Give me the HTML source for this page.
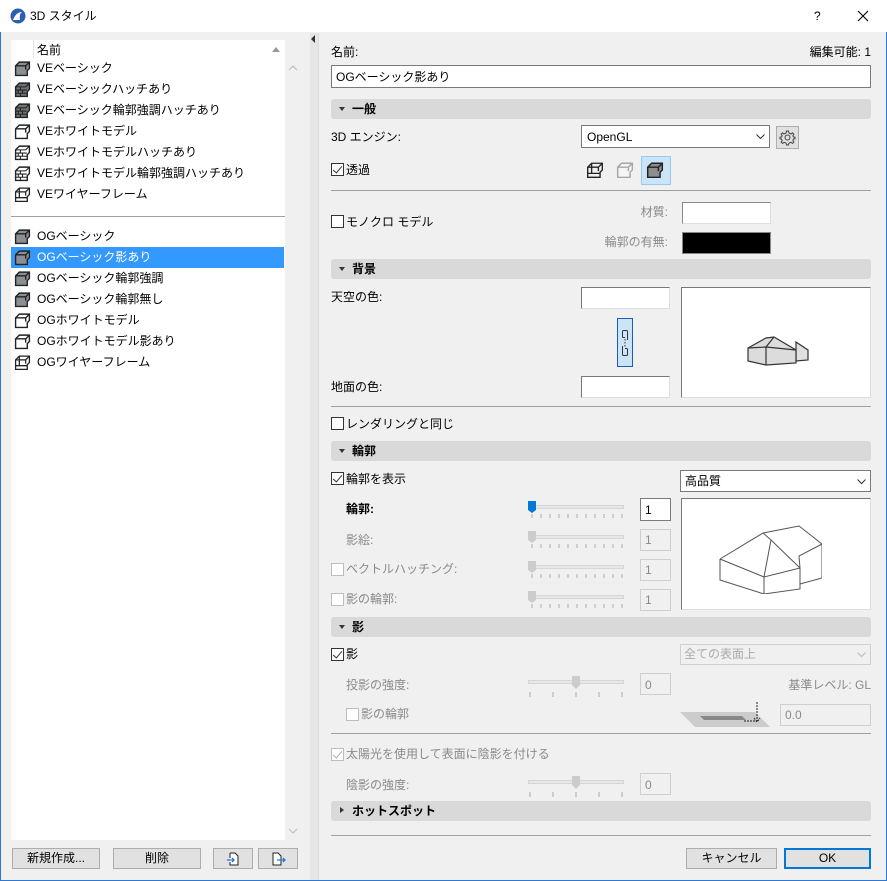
<!DOCTYPE html>
<html><head><meta charset="utf-8">
<style>
*{box-sizing:border-box;margin:0;padding:0}
body{width:887px;height:881px;overflow:hidden;background:#f0f0f0;font-family:"Liberation Sans","Noto Sans CJK JP",sans-serif;font-size:12px;color:#000;position:relative}
.a{position:absolute}
.t{position:absolute;white-space:nowrap;line-height:14px}
.g{color:#8a8a8a}
.box{position:absolute;background:#fff;border:1px solid #7a7a7a}
.dbox{position:absolute;background:#f0f0f0;border:1px solid #cfcfcf}
.sec{position:absolute;left:331px;width:540px;height:20px;background:#d9d9d9;border-radius:3px}
.sec span{position:absolute;left:21px;top:3px;font-weight:bold;line-height:14px}
.sec i{position:absolute;left:8px;top:8px;width:0;height:0;border-left:3px solid transparent;border-right:3px solid transparent;border-top:4px solid #333}
.hr{position:absolute;left:331px;width:540px;height:1px;background:#a0a0a0}
.cb{position:absolute;width:13px;height:13px;border:1px solid #333;background:#fff}
.cb.d{border-color:#bdbdbd}
.ck::after{content:"";position:absolute;left:3px;top:0px;width:4px;height:8px;border-right:1.5px solid #333;border-bottom:1.5px solid #333;transform:rotate(40deg)}
.ck.d::after{border-color:#aaa}
.btn{position:absolute;height:21px;background:#e1e1e1;border:1px solid #adadad;text-align:center;line-height:19px}
.sl{position:absolute;width:96px;height:4px;background:#e7e7e7;border:1px solid #d6d6d6}
.item{position:absolute;left:11px;width:273px;height:21px}
.item span{position:absolute;left:26px;top:3px;line-height:14px;white-space:nowrap}
.item svg{position:absolute;left:3px;top:2px}
</style></head><body>
<div class="a" style="left:0;top:0;width:887px;height:881px;border:1px solid #2b79d6;border-top:none"></div>
<div class="a" style="left:0;top:0;width:887px;height:32px;background:#fff"></div>
<svg class="a" style="left:10px;top:8px" width="16" height="16"><circle cx="8" cy="8" r="7.5" fill="#2d5eb5"/><path d="M3 12 Q6 4 12 4 Q9 6 10 12" fill="#fff"/></svg>
<div class="t" style="left:30px;top:9px">3D スタイル</div>
<div class="t" style="left:814px;top:9px">?</div>
<svg class="a" style="left:857px;top:10px" width="12" height="12"><path d="M1 1 L11 11 M11 1 L1 11" stroke="#000" stroke-width="1.1"/></svg>

<div class="a" style="left:11px;top:40px;width:274px;height:800px;background:#fff"></div>
<div class="a" style="left:33px;top:40px;width:1px;height:18px;background:#e5e5e5"></div>
<div class="t" style="left:37px;top:43px">名前</div>
<div class="a" style="left:272px;top:47px;border-left:4px solid transparent;border-right:4px solid transparent;border-bottom:5px solid #999"></div>
<svg class="a" style="left:288px;top:65px" width="10" height="6"><path d="M1 5 L5 1 L9 5" stroke="#bbb" fill="none"/></svg>
<svg class="a" style="left:288px;top:828px" width="10" height="6"><path d="M1 1 L5 5 L9 1" stroke="#bbb" fill="none"/></svg>

<svg width="0" height="0" style="position:absolute">
<defs>
<symbol id="cg" viewBox="0 0 16 16"><path d="M1.5 5.5 L5 2 H14.5 V8 L12.5 10 V14.5 H1.5 Z" fill="#8b8e92" stroke="#222" stroke-width="1.3"/><path d="M1.5 5.5 H11 V9 M11 5.5 L14.5 2" fill="none" stroke="#222" stroke-width="1.3"/></symbol>
<symbol id="cw" viewBox="0 0 16 16"><path d="M1.5 5.5 L5 2 H14.5 V8 L12.5 10 V14.5 H1.5 Z" fill="#fff" stroke="#222" stroke-width="1.3"/><path d="M1.5 5.5 H11 V9 M11 5.5 L14.5 2" fill="none" stroke="#222" stroke-width="1.3"/></symbol>
<symbol id="chg" viewBox="0 0 16 16"><path d="M1.5 5.5 L5 2 H14.5 V8 L12.5 10 V14.5 H1.5 Z" fill="#6f7276" stroke="#222" stroke-width="1.3"/><path d="M1.5 5.5 H11 M1.5 8.5 H12 M1.5 11.5 H12.5 M6 5.5 V8.5 M4 8.5 V11.5 M8 8.5 V11.5 M6 11.5 V14.5 M11 5.5 L14.5 2" fill="none" stroke="#222" stroke-width="1"/></symbol>
<symbol id="chw" viewBox="0 0 16 16"><path d="M1.5 5.5 L5 2 H14.5 V8 L12.5 10 V14.5 H1.5 Z" fill="#fff" stroke="#222" stroke-width="1.3"/><path d="M1.5 5.5 H11 M1.5 8.5 H12 M1.5 11.5 H12.5 M6 5.5 V8.5 M4 8.5 V11.5 M8 8.5 V11.5 M6 11.5 V14.5 M11 5.5 L14.5 2" fill="none" stroke="#222" stroke-width="1"/></symbol>
<symbol id="cf" viewBox="0 0 16 16"><path d="M1.5 5.5 L5 2 H14.5 V8 L12.5 10 V14.5 H1.5 Z M5 2 V11 H1.5 M5 11 L12.5 11" fill="none" stroke="#222" stroke-width="1.2"/><path d="M1.5 5.5 H11 V9 M11 5.5 L14.5 2" fill="none" stroke="#222" stroke-width="1.2"/></symbol>
</defs></svg>

<div class="item" style="top:58px"><svg width="17" height="17"><use href="#cg"/></svg><span>VEベーシック</span></div>
<div class="item" style="top:79px"><svg width="17" height="17"><use href="#chg"/></svg><span>VEベーシックハッチあり</span></div>
<div class="item" style="top:100px"><svg width="17" height="17"><use href="#chg"/></svg><span>VEベーシック輪郭強調ハッチあり</span></div>
<div class="item" style="top:121px"><svg width="17" height="17"><use href="#cw"/></svg><span>VEホワイトモデル</span></div>
<div class="item" style="top:142px"><svg width="17" height="17"><use href="#chw"/></svg><span>VEホワイトモデルハッチあり</span></div>
<div class="item" style="top:163px"><svg width="17" height="17"><use href="#chw"/></svg><span>VEホワイトモデル輪郭強調ハッチあり</span></div>
<div class="item" style="top:184px"><svg width="17" height="17"><use href="#cf"/></svg><span>VEワイヤーフレーム</span></div>
<div class="a" style="left:11px;top:216px;width:274px;height:1px;background:#a0a0a0"></div>
<div class="item" style="top:226px"><svg width="17" height="17"><use href="#cg"/></svg><span>OGベーシック</span></div>
<div class="item" style="top:247px;background:#3399ff;color:#fff"><svg width="17" height="17"><use href="#cg"/></svg><span>OGベーシック影あり</span></div>
<div class="item" style="top:268px"><svg width="17" height="17"><use href="#cg"/></svg><span>OGベーシック輪郭強調</span></div>
<div class="item" style="top:289px"><svg width="17" height="17"><use href="#cg"/></svg><span>OGベーシック輪郭無し</span></div>
<div class="item" style="top:310px"><svg width="17" height="17"><use href="#cw"/></svg><span>OGホワイトモデル</span></div>
<div class="item" style="top:331px"><svg width="17" height="17"><use href="#cw"/></svg><span>OGホワイトモデル影あり</span></div>
<div class="item" style="top:352px"><svg width="17" height="17"><use href="#cf"/></svg><span>OGワイヤーフレーム</span></div>

<div class="btn" style="left:12px;top:848px;width:88px">新規作成...</div>
<div class="btn" style="left:113px;top:848px;width:88px">削除</div>
<div class="btn" style="left:213px;top:848px;width:40px"><svg width="16" height="16" style="margin-top:2px"><path d="M5 2 H10 L13 5 V14 H5 V11 M5 2 V7" fill="#fff" stroke="#222"/><path d="M2 9 H9 M7 7 L9 9 L7 11" stroke="#2b79d6" fill="none" stroke-width="1.3"/></svg></div>
<div class="btn" style="left:258px;top:848px;width:40px"><svg width="16" height="16" style="margin-top:2px"><path d="M3 2 H8 L11 5 V14 H3 Z" fill="#fff" stroke="#222"/><path d="M7 9 H15 M13 7 L15 9 L13 11" stroke="#2b79d6" fill="none" stroke-width="1.3"/></svg></div>

<div class="a" style="left:310px;top:33px;width:8px;height:847px;background:#e6e6e6"></div>
<div class="a" style="left:311px;top:35px;border-top:4px solid transparent;border-bottom:4px solid transparent;border-right:4px solid #333"></div>
<div class="a" style="left:318px;top:33px;width:1px;height:847px;background:#dadada"></div>

<div class="t" style="left:331px;top:45px">名前:</div>
<div class="t" style="left:780px;top:45px;width:91px;text-align:right">編集可能: 1</div>
<div class="box" style="left:331px;top:65px;width:540px;height:23px"></div>
<div class="t" style="left:336px;top:70px">OGベーシック影あり</div>

<div class="sec" style="top:99px"><i></i><span>一般</span></div>
<div class="t" style="left:331px;top:130px">3D エンジン:</div>
<div class="box" style="left:581px;top:125px;width:189px;height:23px"></div>
<div class="t" style="left:587px;top:130px">OpenGL</div>
<svg class="a" style="left:756px;top:134px" width="9" height="6"><path d="M0.5 0.5 L4.5 4.5 L8.5 0.5" stroke="#333" fill="none"/></svg>
<div class="a" style="left:776px;top:126px;width:23px;height:23px;background:#e1e1e1;border:1px solid #adadad"></div>
<svg class="a" style="left:779px;top:129px" width="17" height="17" viewBox="0 0 17 17"><circle cx="8.5" cy="8.5" r="2.5" fill="none" stroke="#444"/><path d="M7.5 2 H9.5 L10 4 L12 5 L13.5 3.8 L14.9 5.2 L13.8 6.8 L14.5 8 L16 8.2 V9.8 L14.5 10 L13.8 11.5 L14.9 13.1 L13.5 14.5 L12 13.3 L10 14 L9.5 16 H7.5 L7 14 L5 13.3 L3.5 14.5 L2.1 13.1 L3.2 11.5 L2.5 10 L1 9.8 V8.2 L2.5 8 L3.2 6.8 L2.1 5.2 L3.5 3.8 L5 5 L7 4 Z" fill="none" stroke="#444"/></svg>

<div class="cb ck" style="left:331px;top:163px"></div>
<div class="t" style="left:346px;top:163px">透過</div>
<svg class="a" style="left:586px;top:161px" width="18" height="18"><use href="#cf"/></svg>
<svg class="a" style="left:616px;top:161px;opacity:.35" width="18" height="18"><use href="#cw"/></svg>
<div class="a" style="left:641px;top:156px;width:30px;height:29px;background:#cce4f7;border:1px solid #99c9ef"></div>
<svg class="a" style="left:646px;top:161px" width="18" height="18"><use href="#cg"/></svg>
<div class="hr" style="top:190px"></div>

<div class="cb" style="left:331px;top:215px"></div>
<div class="t" style="left:346px;top:215px">モノクロ モデル</div>
<div class="t g" style="left:600px;top:205px;width:68px;text-align:right">材質:</div>
<div class="box" style="left:682px;top:202px;width:89px;height:22px;border-color:#888 #ddd #ddd #888"></div>
<div class="t g" style="left:580px;top:235px;width:88px;text-align:right">輪郭の有無:</div>
<div class="a" style="left:682px;top:232px;width:89px;height:22px;background:#000;border:1px solid #888"></div>

<div class="sec" style="top:259px"><i></i><span>背景</span></div>
<div class="t" style="left:331px;top:290px">天空の色:</div>
<div class="box" style="left:581px;top:287px;width:89px;height:22px;border-color:#777 #ddd #ddd #777"></div>
<div class="a" style="left:617px;top:318px;width:16px;height:49px;background:#cce4f7;border:1px solid #1a5fb4"></div>
<svg class="a" style="left:620px;top:330px" width="10" height="26"><path d="M2.5 1.5 Q2.5 0.5 3.5 0.5 H6.5 Q7.5 0.5 7.5 1.5 V10 M2.5 1.5 V6.5 Q2.5 7.5 3.5 7.5 H5 M2.5 24.5 Q2.5 25.5 3.5 25.5 H6.5 Q7.5 25.5 7.5 24.5 V19.5 Q7.5 18.5 6.5 18.5 H5 M2.5 24.5 V16" fill="none" stroke="#333"/><path d="M5 9 V17" stroke="#333" stroke-dasharray="1.5 1.5"/></svg>
<div class="t" style="left:331px;top:380px">地面の色:</div>
<div class="box" style="left:581px;top:376px;width:89px;height:22px;border-color:#777 #ddd #ddd #777"></div>
<div class="box" style="left:681px;top:287px;width:190px;height:111px;border-color:#777 #ddd #ddd #777"></div>
<svg class="a" style="left:746px;top:328px" width="66" height="40"><path d="M50 14 L62 22 V32 L50 33 Z" fill="#e0e0e0" stroke="#333" stroke-width="1.2"/><path d="M2 20 L20 10 L28 9 L50 22 V35 L20 37 L2 33 Z" fill="#dcdcdc" stroke="#333" stroke-width="1.2"/><path d="M2 20 L20 19 L50 22 M20 19 V37 M20 19 L28 9" fill="none" stroke="#333" stroke-width="1.2"/></svg>
<div class="hr" style="top:406px"></div>

<div class="cb" style="left:331px;top:417px"></div>
<div class="t" style="left:346px;top:417px">レンダリングと同じ</div>

<div class="sec" style="top:441px"><i></i><span>輪郭</span></div>
<div class="cb ck" style="left:331px;top:472px"></div>
<div class="t" style="left:346px;top:472px">輪郭を表示</div>
<div class="box" style="left:680px;top:470px;width:191px;height:22px"></div>
<div class="t" style="left:685px;top:474px">高品質</div>
<svg class="a" style="left:857px;top:479px" width="9" height="6"><path d="M0.5 0.5 L4.5 4.5 L8.5 0.5" stroke="#333" fill="none"/></svg>

<div class="t" style="left:346px;top:502px;font-weight:bold">輪郭:</div>
<div class="t g" style="left:346px;top:533px">影絵:</div>
<div class="cb d" style="left:331px;top:563px"></div>
<div class="t g" style="left:346px;top:562px">ベクトルハッチング:</div>
<div class="cb d" style="left:331px;top:593px"></div>
<div class="t g" style="left:346px;top:592px">影の輪郭:</div>

<div class="sl" style="left:528px;top:505px"></div>
<div class="sl" style="left:528px;top:535px"></div>
<div class="sl" style="left:528px;top:565px"></div>
<div class="sl" style="left:528px;top:595px"></div>
<svg class="a" style="left:527px;top:500px" width="10" height="14"><path d="M1 1 H9 V10 L5 13 L1 10 Z" fill="#0078d7"/></svg>
<svg class="a" style="left:527px;top:530px" width="10" height="14"><path d="M1 1 H9 V10 L5 13 L1 10 Z" fill="#ccc"/></svg>
<svg class="a" style="left:527px;top:560px" width="10" height="14"><path d="M1 1 H9 V10 L5 13 L1 10 Z" fill="#ccc"/></svg>
<svg class="a" style="left:527px;top:590px" width="10" height="14"><path d="M1 1 H9 V10 L5 13 L1 10 Z" fill="#ccc"/></svg>
<svg class="a" style="left:528px;top:514px" width="96" height="95"><g stroke="#aaa"><path d="M4 0v4M13 0v4M22 0v4M31 0v4M40 0v4M49 0v4M58 0v4M67 0v4M76 0v4M85 0v4M94 0v4"/><path d="M4 30v4M13 30v4M22 30v4M31 30v4M40 30v4M49 30v4M58 30v4M67 30v4M76 30v4M85 30v4M94 30v4"/><path d="M4 60v4M13 60v4M22 60v4M31 60v4M40 60v4M49 60v4M58 60v4M67 60v4M76 60v4M85 60v4M94 60v4"/><path d="M4 90v4M13 90v4M22 90v4M31 90v4M40 90v4M49 90v4M58 90v4M67 90v4M76 90v4M85 90v4M94 90v4"/></g></svg>
<div class="box" style="left:640px;top:498px;width:31px;height:23px"></div>
<div class="t" style="left:645px;top:503px">1</div>
<div class="dbox" style="left:640px;top:529px;width:31px;height:22px"></div><div class="t g" style="left:645px;top:533px">1</div>
<div class="dbox" style="left:640px;top:559px;width:31px;height:22px"></div><div class="t g" style="left:645px;top:563px">1</div>
<div class="dbox" style="left:640px;top:589px;width:31px;height:22px"></div><div class="t g" style="left:645px;top:593px">1</div>
<div class="box" style="left:681px;top:498px;width:190px;height:112px;border-color:#777 #ddd #ddd #777"></div>
<svg class="a" style="left:712px;top:522px" width="110" height="72" viewBox="0 0 110 72"><g fill="none" stroke="#555" stroke-width="1"><path d="M8 37 L51 11 L87 4 L110 22 V56 L88 62"/><path d="M8 37 V58 L52 72 L88 67 V46 L52 55 L8 37"/><path d="M52 55 V72 M51 11 L59 18 L88 46 M59 18 L52 55 M88 46 L87 34 L110 22"/></g></svg>

<div class="sec" style="top:617px"><i></i><span>影</span></div>
<div class="cb ck" style="left:331px;top:648px"></div>
<div class="t" style="left:346px;top:647px">影</div>
<div class="dbox" style="left:680px;top:644px;width:191px;height:21px;background:#f0f0f0"></div>
<div class="t" style="left:684px;top:647px;color:#aaa">全ての表面上</div>
<svg class="a" style="left:857px;top:652px" width="9" height="6"><path d="M0.5 0.5 L4.5 4.5 L8.5 0.5" stroke="#bbb" fill="none"/></svg>
<div class="t g" style="left:346px;top:678px">投影の強度:</div>
<div class="sl" style="left:528px;top:680px"></div>
<svg class="a" style="left:571px;top:675px" width="10" height="15"><path d="M1 1 H9 V10 L5 14 L1 10 Z" fill="#ccc"/></svg>
<svg class="a" style="left:528px;top:692px" width="96" height="6"><path d="M2 0v5M25 0v5M48 0v5M71 0v5M94 0v5" stroke="#aaa"/></svg>
<div class="dbox" style="left:640px;top:673px;width:31px;height:22px"></div><div class="t g" style="left:645px;top:678px">0</div>
<div class="t g" style="left:760px;top:678px;width:111px;text-align:right">基準レベル: GL</div>
<div class="cb d" style="left:346px;top:708px"></div>
<div class="t g" style="left:361px;top:707px">影の輪郭</div>
<svg class="a" style="left:680px;top:702px" width="90" height="26"><path d="M0 10 H75 L90 25 H15 Z" fill="#ccc"/><path d="M20 14 H62 L66 18 H24 Z" fill="#888"/><path d="M77 0 V19 M74 16 L77 20 L80 16 M64 19 H77" stroke="#222" stroke-dasharray="2 1" fill="none"/></svg>
<div class="dbox" style="left:780px;top:704px;width:91px;height:22px"></div><div class="t g" style="left:785px;top:708px">0.0</div>
<div class="hr" style="top:733px"></div>

<div class="cb ck d" style="left:331px;top:748px"></div>
<div class="t g" style="left:346px;top:747px">太陽光を使用して表面に陰影を付ける</div>
<div class="t g" style="left:346px;top:778px">陰影の強度:</div>
<div class="sl" style="left:528px;top:780px"></div>
<svg class="a" style="left:571px;top:775px" width="10" height="15"><path d="M1 1 H9 V10 L5 14 L1 10 Z" fill="#ccc"/></svg>
<svg class="a" style="left:528px;top:792px" width="96" height="6"><path d="M2 0v5M25 0v5M48 0v5M71 0v5M94 0v5" stroke="#aaa"/></svg>
<div class="dbox" style="left:640px;top:773px;width:31px;height:22px"></div><div class="t g" style="left:645px;top:778px">0</div>

<div class="sec" style="top:801px"><i style="left:9px;top:6px;border-top:3px solid transparent;border-bottom:3px solid transparent;border-left:4px solid #333;border-right:none"></i><span>ホットスポット</span></div>
<div class="hr" style="top:835px"></div>

<div class="btn" style="left:686px;top:848px;width:91px">キャンセル</div>
<div class="btn" style="left:784px;top:848px;width:87px;border:2px solid #0078d7;line-height:17px">OK</div>
</body></html>
